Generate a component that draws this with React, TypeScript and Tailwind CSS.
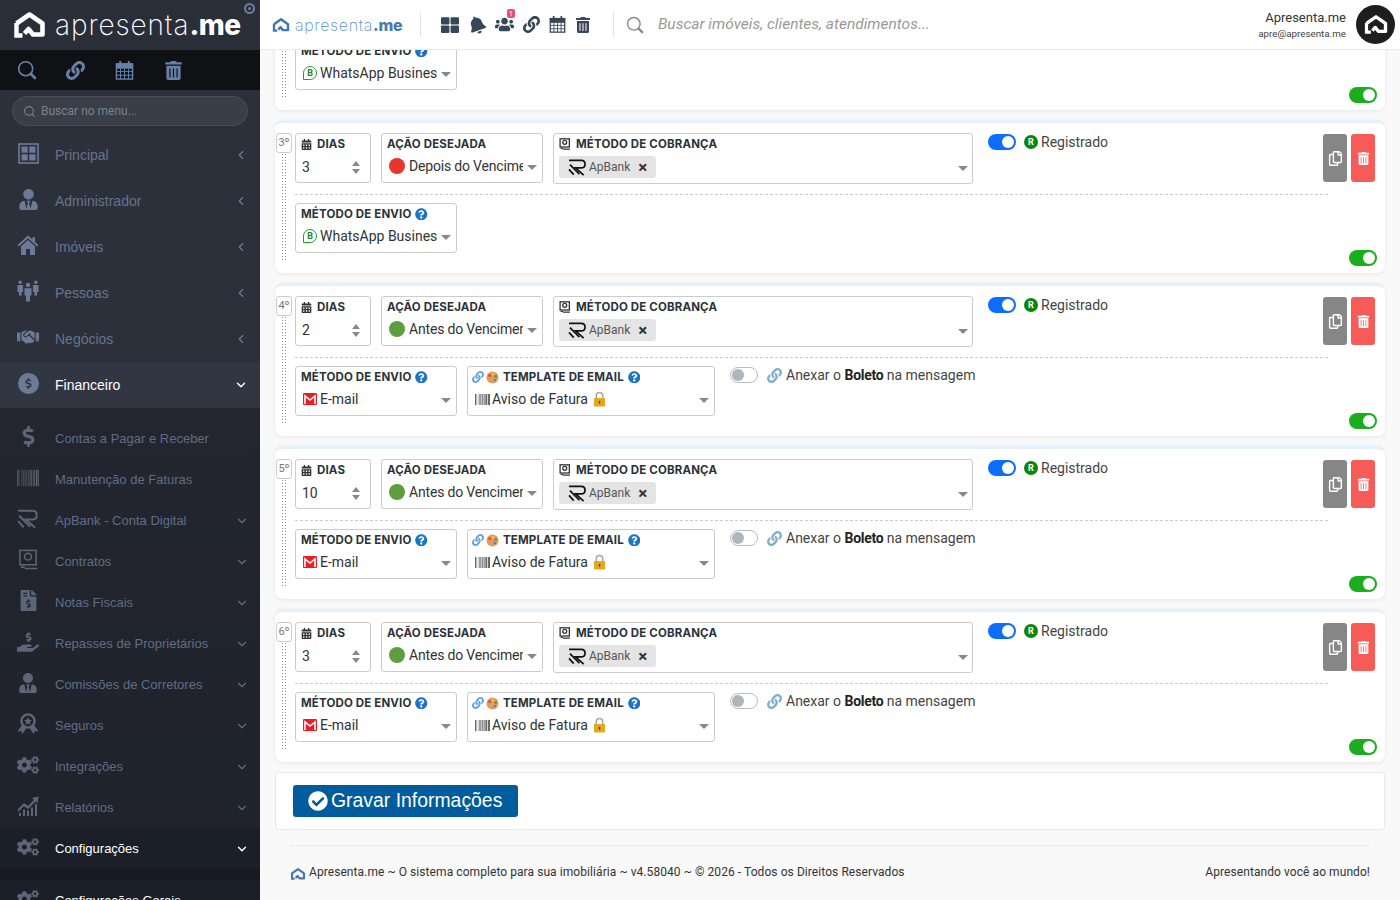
import type { ReactNode } from "react";
import { ChevronDown, ChevronLeft, Search } from "lucide-react";
import {
  FaBarcode,
  FaBell,
  FaCalendarAlt,
  FaCheckCircle,
  FaCogs,
  FaDollarSign,
  FaFileInvoiceDollar,
  FaHandHoldingUsd,
  FaLink,
  FaQuestionCircle,
  FaRegCopy,
  FaThLarge,
  FaTrashAlt,
  FaUsers,
  FaUserTie,
} from "react-icons/fa";
import { FaHandshake } from "react-icons/fa6";

function HouseLogo({ className, color = "#fff" }: { className?: string; color?: string }) {
  return (
    <svg viewBox="0 0 32 26" className={className} fill="none">
      <path
        d="M3 11.5 L16 2.5 L29 11.5 V22.5 H19.5 L15 17 L11 21.5"
        stroke={color}
        strokeWidth="4.6"
        strokeLinejoin="round"
      />
      <path d="M3 11 V23.5 H9" stroke={color} strokeWidth="4.4" />
    </svg>
  );
}

function ApBankLogo({ className, color = "#111" }: { className?: string; color?: string }) {
  return (
    <svg viewBox="0 0 20 18" className={className} fill="none" stroke={color} strokeWidth="1.8">
      <path d="M1 1.5 H14 Q18 1.5 18 5.5 Q18 9.5 13.5 9.5 H8 L16.5 17" />
      <path d="M2 6 L12 16" />
      <path d="M1 11 L6 16.5" />
    </svg>
  );
}

function CalendarGrid({ size }: { size: number }) {
  return (
    <svg viewBox="0 0 20 20" width={size} height={size} fill="none" stroke="currentColor">
      <rect x="1.5" y="3" width="17" height="16" strokeWidth="1.5" />
      <path d="M1.5 3 H18.5 V7.5 H1.5 Z" fill="currentColor" strokeWidth="1" />
      <path d="M1.5 11 H18.5 M1.5 15 H18.5 M5.8 7.5 V19 M10 7.5 V19 M14.2 7.5 V19" strokeWidth="1" />
      <path d="M5.5 0.5 V4.5 M14.5 0.5 V4.5" strokeWidth="2" strokeLinecap="round" />
    </svg>
  );
}

function LensIcon({ size }: { size: number }) {
  return (
    <svg viewBox="0 0 20 20" width={size} height={size} fill="none" stroke="currentColor">
      <circle cx="8.7" cy="8.7" r="7" strokeWidth="1.6" />
      <path d="M14 14 L18 18" strokeWidth="2.6" strokeLinecap="round" />
    </svg>
  );
}

function PrincipalIcon() {
  return (
    <svg viewBox="0 0 21 21" className="h-[21px] w-[21px]">
      <rect x="1" y="1" width="19" height="19" fill="none" stroke="currentColor" strokeWidth="1.6" />
      <rect x="3.5" y="3.5" width="6.2" height="6.2" fill="currentColor" />
      <rect x="11.3" y="3.5" width="6.2" height="6.2" fill="currentColor" />
      <rect x="3.5" y="11.3" width="6.2" height="6.2" fill="currentColor" />
      <rect x="11.3" y="11.3" width="6.2" height="6.2" fill="currentColor" />
    </svg>
  );
}

function HomeIcon() {
  return (
    <svg viewBox="0 0 22 20" className="h-[20px] w-[22px]" fill="currentColor">
      <path d="M0.5 10 L11 0.5 L15.5 4.6 V2 H18 V6.9 L21.5 10 L20.2 11.4 L11 3.2 L1.8 11.4 Z" />
      <path d="M4 11.2 L11 5 L18 11.2 V20 H13 V14 H9 V20 H4 Z" />
    </svg>
  );
}

function PessoasIcon() {
  return (
    <svg viewBox="0 0 22 22" className="h-[22px] w-[22px]" fill="currentColor">
      <circle cx="3.2" cy="2.2" r="1.7" />
      <path d="M0.5 5 H6 V12 H4.6 V15.5 H2 V12 H0.5 Z" />
      <circle cx="18.8" cy="2.2" r="1.7" />
      <path d="M16 5 H21.5 V12 H20 V15.5 H17.4 V12 H16 Z" />
      <circle cx="11" cy="5" r="2.2" />
      <path d="M7.5 8.2 H14.5 V15.5 H13 V21.5 H9 V15.5 H7.5 Z" />
    </svg>
  );
}

function ContratoIcon({ className = "h-[21px] w-[21px]" }: { className?: string }) {
  return (
    <svg viewBox="0 0 22 22" className={className} fill="none" stroke="currentColor" strokeWidth="1.6">
      <rect x="2" y="1.5" width="17" height="15" />
      <circle cx="10.5" cy="8" r="3.6" />
      <path d="M7 20.5 H20 M3 19 H7" />
    </svg>
  );
}

function SegurosIcon() {
  return (
    <svg viewBox="0 0 22 22" className="h-[22px] w-[22px]">
      <path d="M5 12 L0.5 18.5 L4 18 L5.5 21 L9 15.5 Z M17 12 L21.5 18.5 L18 18 L16.5 21 L13 15.5 Z" fill="currentColor" />
      <circle cx="11" cy="8" r="6.6" fill="none" stroke="currentColor" strokeWidth="2.4" />
      <path d="M11 4.2 L12.2 6.8 L15 7.1 L12.9 9 L13.5 11.8 L11 10.4 L8.5 11.8 L9.1 9 L7 7.1 L9.8 6.8 Z" fill="currentColor" />
    </svg>
  );
}

function ChartIcon() {
  return (
    <svg viewBox="0 0 22 20" className="h-[20px] w-[22px]" fill="currentColor">
      <path d="M1 13 L7 7 L11 10 L17 4 L15 2 L21.5 0.5 L20.5 7 L18.5 5.5 L11 13 L7 10 L1 16 Z" />
      <path d="M2 17 H4 V20 H2 Z M6 13.5 H8 V20 H6 Z M10 14.5 H12 V20 H10 Z M14 11.5 H16 V20 H14 Z M18 8 H20 V20 H18 Z" />
    </svg>
  );
}

function DollarCircle() {
  return (
    <span className="flex h-[21px] w-[21px] items-center justify-center rounded-full bg-[#6d7a97]">
      <FaDollarSign size={11} className="text-[#323643]" />
    </span>
  );
}

function MainItem({ icon, label, active }: { icon: ReactNode; label: string; active?: boolean }) {
  return (
    <div
      className={`flex h-[46px] items-center pl-[17px] pr-3 text-[14px] ${
        active ? "bg-[#323643] text-white" : "text-[#65748f]"
      }`}
    >
      <span className={`-mt-1 flex w-[22px] justify-center ${active ? "" : "text-[#6d7a97]"}`}>{icon}</span>
      <span className="ml-4 flex-1">{label}</span>
      {active ? (
        <ChevronDown size={14} strokeWidth={2.5} className="text-white" />
      ) : (
        <ChevronLeft size={14} strokeWidth={2} className="text-[#6d7a97]" />
      )}
    </div>
  );
}

function SubItem({ icon, label, arrow, active }: { icon: ReactNode; label: string; arrow?: boolean; active?: boolean }) {
  return (
    <div
      className={`flex h-[41px] items-center pl-[17px] pr-[11px] text-[13px] ${
        active ? "bg-[#1b1f27] text-white" : "text-[#5f6d87]"
      }`}
    >
      <span className="-mt-1 flex w-[22px] justify-center text-[#5d6678]">{icon}</span>
      <span className="ml-4 flex-1 whitespace-nowrap">{label}</span>
      {arrow && (
        <ChevronDown
          size={14}
          strokeWidth={active ? 2.5 : 2}
          className={active ? "text-white" : "text-[#5f6d87]"}
        />
      )}
    </div>
  );
}

function Sidebar() {
  return (
    <aside className="h-full w-[260px] shrink-0 overflow-hidden bg-[#2c303b] font-['Liberation_Sans',sans-serif]">
      <div className="relative flex h-[50px] items-center bg-[#2a2e39] pl-[13px]">
        <HouseLogo className="h-[26px] w-[33px]" />
        <span className="ml-[9px] whitespace-nowrap font-['Inter',sans-serif] text-[28px] font-extralight tracking-[0.9px] text-white">
          apresenta<span className="font-extrabold tracking-[-0.5px]">.me</span>
        </span>
        <span className="absolute right-[5px] top-[3px] flex h-[11px] w-[11px] items-center justify-center rounded-full border-2 border-[#6d7f9e]">
          <span className="h-[3px] w-[3px] rounded-full bg-[#6d7f9e]" />
        </span>
      </div>
      <div className="flex h-[40px] items-center gap-[30px] bg-[#0f1114] pl-[17px] text-[#6780a8]">
        <span className="-mr-px">
          <LensIcon size={20} />
        </span>
        <FaLink size={19} />
        <CalendarGrid size={19} />
        <FaTrashAlt size={19} />
      </div>
      <div className="px-3 pb-[6px] pt-[6px]">
        <div className="flex h-[30px] items-center rounded-full border border-[#4a4e59] bg-[#3a3e49] pl-[10px] text-[12px] text-[#7b8290]">
          <Search size={13} className="mr-[5px]" />
          <span className="font-['Roboto',sans-serif]">Buscar no menu...</span>
        </div>
      </div>
      <MainItem icon={<PrincipalIcon />} label="Principal" />
      <MainItem icon={<FaUserTie size={21} />} label="Administrador" />
      <MainItem icon={<HomeIcon />} label="Imóveis" />
      <MainItem icon={<PessoasIcon />} label="Pessoas" />
      <MainItem icon={<FaHandshake size={22} />} label="Negócios" />
      <MainItem icon={<DollarCircle />} label="Financeiro" active />
      <div className="bg-gradient-to-b from-[#23262f] to-[#1e222b] pt-[10px]">
        <SubItem icon={<FaDollarSign size={21} />} label="Contas a Pagar e Receber" />
        <SubItem icon={<FaBarcode size={22} />} label="Manutenção de Faturas" />
        <SubItem icon={<ApBankLogo className="h-[20px] w-[22px]" color="#5d6678" />} label="ApBank - Conta Digital" arrow />
        <SubItem icon={<ContratoIcon />} label="Contratos" arrow />
        <SubItem icon={<FaFileInvoiceDollar size={21} />} label="Notas Fiscais" arrow />
        <SubItem icon={<FaHandHoldingUsd size={22} />} label="Repasses de Proprietários" arrow />
        <SubItem icon={<FaUserTie size={20} />} label="Comissões de Corretores" arrow />
        <SubItem icon={<SegurosIcon />} label="Seguros" arrow />
        <SubItem icon={<FaCogs size={22} />} label="Integrações" arrow />
        <SubItem icon={<ChartIcon />} label="Relatórios" arrow />
        <SubItem icon={<FaCogs size={22} />} label="Configurações" arrow active />
        <div className="h-[11px] bg-[#171a21]" />
        <SubItem icon={<FaCogs size={22} />} label="Configurações Gerais" active />
      </div>
    </aside>
  );
}

function Header() {
  return (
    <header className="flex h-[50px] shrink-0 items-center border-b border-[#e9e9e9] bg-white pl-3 pr-[5px]">
      <HouseLogo className="h-[14px] w-[18px]" color="#3f78ad" />
      <span className="ml-[5px] w-[110px] whitespace-nowrap font-['Inter',sans-serif] text-[16px] font-extralight tracking-[0.65px] text-[#5b8fbf]">
        apresenta<span className="font-extrabold tracking-[-0.3px] text-[#4a7ba8]">.me</span>
      </span>
      <span className="ml-[15px] h-[25px] w-px bg-[#e2e2e2]" />
      <div className="ml-[20px] flex items-center gap-[9px] text-[#37475a]">
        <FaThLarge size={18} />
        <FaBell size={18} className="-rotate-[20deg]" />
        <span className="relative">
          <FaUsers size={19} />
          <span className="absolute -right-[1px] -top-[6px] flex h-[9px] w-[8px] items-center justify-center rounded-[2px] bg-[#ec4d7b] text-[7px] leading-none text-white">
            1
          </span>
        </span>
        <FaLink size={17} />
        <CalendarGrid size={17} />
        <FaTrashAlt size={16} />
      </div>
      <span className="ml-[22px] h-[25px] w-px bg-[#e2e2e2]" />
      <span className="ml-3 text-[#8b8b8b]">
        <LensIcon size={18} />
      </span>
      <span className="ml-[14px] flex-1 font-['Roboto',sans-serif] text-[15.5px] italic text-[#999]">
        Buscar imóveis, clientes, atendimentos...
      </span>
      <div className="mr-[10px] text-right font-['Roboto',sans-serif] leading-none text-[#333]">
        <div className="text-[13px]">Apresenta.me</div>
        <div className="mt-[5px] text-[9.8px] text-[#444]">apre@apresenta.me</div>
      </div>
      <span className="flex h-[39px] w-[39px] items-center justify-center rounded-full bg-[#1e1e1e]">
        <HouseLogo className="h-[19px] w-[24px]" />
      </span>
    </header>
  );
}

function Label({ children }: { children: ReactNode }) {
  return (
    <div className="flex items-center whitespace-nowrap font-['Inter',sans-serif] text-[11.5px] font-bold leading-[14px] tracking-[0.15px] text-[#2c3338]">
      {children}
    </div>
  );
}

function Help() {
  return <FaQuestionCircle size={12.5} className="ml-[4px] text-[#1b74c4]" />;
}

function Caret() {
  return <span className="h-0 w-0 border-x-[5px] border-t-[5px] border-x-transparent border-t-[#888]" />;
}

function Dot({ color }: { color: string }) {
  return <span className="mr-1 inline-block h-4 w-4 shrink-0 rounded-full" style={{ backgroundColor: color }} />;
}

function WhatsIcon() {
  return (
    <span className="mr-[3px] flex h-[14px] w-[14px] shrink-0 items-center justify-center rounded-full rounded-bl-none border-[1.5px] border-[#1f9e2c] text-[9px] font-bold leading-none text-[#1a7f2a]">
      B
    </span>
  );
}

function GmailIcon() {
  return (
    <svg viewBox="0 0 14 12" className="mr-[3px] h-[12px] w-[14px] shrink-0">
      <rect width="14" height="12" rx="1" fill="#ee1c25" />
      <path d="M2 11 V3 L7 7 L12 3 V11" fill="none" stroke="#fff" strokeWidth="1.6" />
    </svg>
  );
}

function PaletteIcon() {
  return (
    <svg viewBox="0 0 14 14" className="mr-[4px] h-[13px] w-[13px] shrink-0">
      <circle cx="7" cy="7" r="6.5" fill="#e59a5c" />
      <circle cx="4" cy="5" r="1.4" fill="#d9412f" />
      <circle cx="7.5" cy="3.5" r="1.3" fill="#f1c232" />
      <circle cx="10.5" cy="6" r="1.3" fill="#3f9a42" />
      <circle cx="9.5" cy="9.8" r="1.3" fill="#3d7fd1" />
    </svg>
  );
}

function LockIcon() {
  return (
    <svg viewBox="0 0 14 17" className="ml-[5px] h-[16px] w-[13px] shrink-0">
      <path d="M3.5 8 V5 a3.5 3.5 0 0 1 7 0 V8" fill="none" stroke="#a9a9a9" strokeWidth="1.7" />
      <rect x="1" y="7.5" width="12" height="9" rx="1" fill="#e3a81c" />
      <rect x="6.2" y="10.5" width="1.6" height="3" fill="#6b4a08" />
    </svg>
  );
}

function Field({
  className,
  label,
  children,
}: {
  className: string;
  label: ReactNode;
  children: ReactNode;
}) {
  return (
    <div className={`shrink-0 rounded-[3px] border border-[#ccc] bg-white pl-[5px] pr-[4px] pt-[3px] ${className}`}>
      <Label>{label}</Label>
      {children}
    </div>
  );
}

function SelectValue({ children }: { children: ReactNode }) {
  return (
    <div className="mt-[5px] flex h-[20px] items-center pl-[2px] font-['Roboto',sans-serif] text-[14px] text-[#333]">
      <div className="flex min-w-0 flex-1 items-center overflow-hidden whitespace-nowrap">{children}</div>
      <span className="ml-[4px] mt-[3px] flex shrink-0 pr-[1px]">
        <Caret />
      </span>
    </div>
  );
}

function Switch({ state }: { state: "blue" | "green" | "off" }) {
  if (state === "off") {
    return (
      <span className="flex h-[16px] w-[28px] shrink-0 items-center rounded-full border border-[#bbb] bg-white pl-px">
        <span className="h-[12px] w-[12px] rounded-full bg-[#adb5bd]" />
      </span>
    );
  }
  return (
    <span
      className={`flex h-[16px] w-[28px] shrink-0 items-center justify-end rounded-full pr-[2px] ${
        state === "blue" ? "bg-[#0d6efd]" : "bg-[#1aae1f]"
      }`}
    >
      <span className="h-[12px] w-[12px] rounded-full bg-white" />
    </span>
  );
}

function EnvioField({ whatsapp }: { whatsapp: boolean }) {
  return (
    <Field
      className="h-[50px] w-[162px]"
      label={
        <>
          MÉTODO DE ENVIO
          <Help />
        </>
      }
    >
      {whatsapp ? (
        <SelectValue>
          <WhatsIcon />
          WhatsApp Business
        </SelectValue>
      ) : (
        <SelectValue>
          <GmailIcon />
          E-mail
        </SelectValue>
      )}
    </Field>
  );
}

type Rule = { n: string; dias: string; acao: string; color: string; whatsapp: boolean };

const rules: Rule[] = [
  { n: "2º", dias: "5", acao: "Depois do Vencimento", color: "#e8352e", whatsapp: true },
  { n: "3º", dias: "3", acao: "Depois do Vencimento", color: "#e8352e", whatsapp: true },
  { n: "4º", dias: "2", acao: "Antes do Vencimento", color: "#5f9e40", whatsapp: false },
  { n: "5º", dias: "10", acao: "Antes do Vencimento", color: "#5f9e40", whatsapp: false },
  { n: "6º", dias: "3", acao: "Antes do Vencimento", color: "#5f9e40", whatsapp: false },
];

function RuleCard({ rule, first }: { rule: Rule; first?: boolean }) {
  return (
    <section
      className={`flex h-[153px] shrink-0 rounded-lg border-t-[3px] border-[#e2f1fb] bg-white pl-px pr-2 pt-[10px] shadow-[0_1px_4px_rgba(0,0,0,0.08)] ${
        first ? "-mt-[93px]" : "mt-[10px]"
      }`}
    >
      <div className="flex w-[19px] shrink-0 flex-col items-start">
        <span className="flex h-[20px] w-[16px] items-center justify-center rounded-[3px] border border-[#ccc] bg-white font-['Roboto',sans-serif] text-[11px] text-[#777]">
          {rule.n}
        </span>
        <span className="ml-[5px] h-[108px] w-[7px] bg-[radial-gradient(#888_0.7px,transparent_0.8px)] bg-[length:3px_3px]" />
      </div>
      <div className="min-w-0 flex-1">
        <div className="flex h-[50px] gap-[10px]">
          <Field
            className="h-[50px] w-[76px]"
            label={
              <>
                <FaCalendarAlt size={11} className="mr-[5px] text-[#333]" />
                DIAS
              </>
            }
          >
            <div className="mt-[6px] flex items-center justify-between pr-[6px] font-['Roboto',sans-serif] text-[14px] text-[#333]">
              <span className="ml-px">{rule.dias}</span>
              <span className="flex flex-col gap-[3px]">
                <span className="h-0 w-0 border-x-[4px] border-b-[5px] border-x-transparent border-b-[#888]" />
                <span className="h-0 w-0 border-x-[4px] border-t-[5px] border-x-transparent border-t-[#888]" />
              </span>
            </div>
          </Field>
          <Field className="h-[50px] w-[162px]" label="AÇÃO DESEJADA">
            <SelectValue>
              <Dot color={rule.color} />
              <span className="tracking-[-0.18px]">{rule.acao}</span>
            </SelectValue>
          </Field>
          <Field
            className="h-[51px] w-[420px]"
            label={
              <>
                <ContratoIcon className="mr-[5px] h-[12px] w-[12px] stroke-[2.4] text-[#333]" />
                MÉTODO DE COBRANÇA
              </>
            }
          >
            <div className="mt-[5px] flex items-center justify-between">
              <span className="flex h-[22px] w-[97px] items-center rounded-[3px] bg-[#e4e4e4] pl-[9px] font-['Roboto',sans-serif] text-[12px] text-[#555]">
                <ApBankLogo className="mr-[2px] h-[17px] w-[19px] shrink-0" />
                ApBank
                <span className="ml-[8px] text-[17px] font-bold leading-none text-[#333]">×</span>
              </span>
              <span className="mt-[3px] flex">
                <Caret />
              </span>
            </div>
          </Field>
          <div className="ml-[5px] flex h-[18px] items-center self-start font-['Roboto',sans-serif] text-[14px] text-[#444]">
            <Switch state="blue" />
            <span className="ml-2 mr-[3px] flex h-[14px] w-[14px] items-center justify-center rounded-full bg-[#0a860a] text-[9px] font-bold leading-none text-white">
              R
            </span>
            Registrado
          </div>
          <div className="ml-auto mr-[2px] mt-px flex gap-1">
            <span className="flex h-[48px] w-[24px] items-center justify-center rounded-[3px] bg-[#868686] text-white">
              <FaRegCopy size={15} />
            </span>
            <span className="flex h-[48px] w-[24px] items-center justify-center rounded-[3px] bg-[#f75b58] text-white">
              <FaTrashAlt size={13} />
            </span>
          </div>
        </div>
        <div className="mt-[11px] w-[1033px] border-t border-dashed border-[#ccc]" />
        <div className="mt-2 flex h-[63px] gap-[10px]">
          <EnvioField whatsapp={rule.whatsapp} />
          {!rule.whatsapp && (
            <>
              <Field
                className="h-[50px] w-[248px]"
                label={
                  <>
                    <FaLink size={12} className="-ml-[1px] mr-[2px] text-[#5f9fe0]" />
                    <PaletteIcon />
                    TEMPLATE DE EMAIL
                    <Help />
                  </>
                }
              >
                <SelectValue>
                  <FaBarcode size={15} className="mr-[2px] shrink-0 text-[#333]" />
                  Aviso de Fatura
                  <LockIcon />
                </SelectValue>
              </Field>
              <div className="ml-[5px] flex h-[18px] items-center self-start font-['Roboto',sans-serif] text-[14px] text-[#444]">
                <Switch state="off" />
                <FaLink size={15} className="ml-[9px] mr-[4px] text-[#7fb0c8]" />
                Anexar o&nbsp;<b className="font-bold tracking-[-0.3px] text-[#222]">Boleto</b>&nbsp;na mensagem
              </div>
            </>
          )}
          <span className="ml-auto self-end">
            <Switch state="green" />
          </span>
        </div>
      </div>
    </section>
  );
}

export default function App() {
  return (
    <div className="flex h-screen w-full overflow-hidden bg-[#f9f9f9]">
      <Sidebar />
      <div className="flex min-w-0 flex-1 flex-col">
        <Header />
        <main className="relative flex min-h-0 flex-1 flex-col overflow-hidden pl-[15px] pr-[15px]">
          {rules.map((r, i) => (
            <RuleCard key={r.n} rule={r} first={i === 0} />
          ))}
          <div className="mt-[10px] flex h-[58px] shrink-0 items-center rounded-[3px] border border-[#e8e8e8] bg-white pl-[17px]">
            <button className="flex h-[32px] w-[225px] items-center rounded-[3px] bg-[#005c9c] pl-[15px] font-['Liberation_Sans',sans-serif] text-[19.4px] text-white">
              <FaCheckCircle size={20} className="mr-[3px]" />
              Gravar Informações
            </button>
          </div>
          <div className="ml-[15px] mr-[15px] mt-[15px] flex items-center justify-between border-t border-[#ececec] pt-[17px] font-['Roboto',sans-serif] text-[12px] tracking-[0.07px] text-[#333]">
            <span className="flex items-center">
              <HouseLogo className="mr-[3px] mt-[3px] h-[12px] w-[16px]" color="#3f78ad" />
              Apresenta.me ~ O sistema completo para sua imobiliária ~ v4.58040 ~ © 2026 - Todos os Direitos Reservados
            </span>
            <span>Apresentando você ao mundo!</span>
          </div>
        </main>
      </div>
    </div>
  );
}
